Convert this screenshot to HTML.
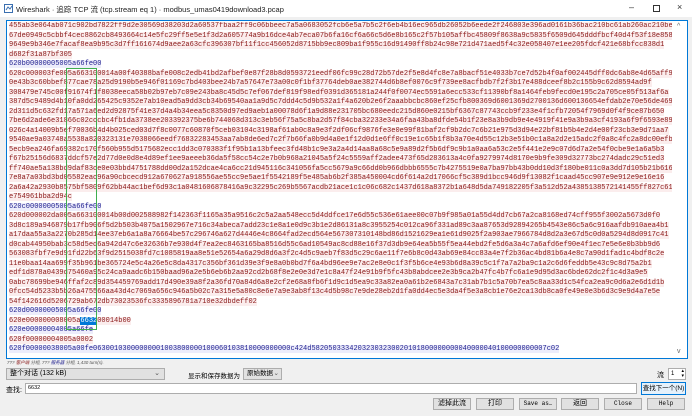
<!DOCTYPE html>
<html><head><meta charset="utf-8"><style>
*{margin:0;padding:0;box-sizing:border-box}
body{width:692px;height:416px;background:#f0f0f0;position:relative;overflow:hidden;font-family:"Liberation Sans","Noto Sans CJK SC",sans-serif;font-size:8px;color:#000}
.abs{position:absolute}
#title{left:0;top:0;width:692px;height:17px;background:#fff}
#ta{left:6px;top:20px;width:682px;height:339px;border:1px solid #0078d7;background:#fff;overflow:hidden}
#txt{position:absolute;left:2px;top:1px;width:663px;height:336px;overflow:hidden;font-family:"Liberation Mono",monospace;font-size:7px;line-height:9.5px;white-space:pre}
.c{color:#8a1818;background:#fbeded}
.s{color:#1e1e8e;background:#ededfb}
.hl{background:#0078d7;color:#fff}
.btn{position:absolute;top:398px;height:12px;width:38px;border:1px solid #adadad;background:#e1e1e1;font-size:7px;text-align:center;line-height:10px;font-family:"Liberation Mono","Noto Sans CJK SC",monospace}
.combo{position:absolute;border:1px solid #adadad;background:#e1e1e1;height:12px;font-size:7px;line-height:10px;padding-left:3px}
</style></head><body>
<div id="title" class="abs">
<svg class="abs" style="left:4px;top:4px" width="9" height="9"><rect x="0.5" y="0.5" width="8" height="8" fill="#fff" stroke="#3a6fb0"/><path d="M2 6 L4 3 L6 5 L8 2" stroke="#3a6fb0" fill="none"/></svg>
<div class="abs" style="left:16px;top:4px;font-size:7.5px;color:#222">Wireshark · 追踪 TCP 流 (tcp.stream eq 1) · modbus_umas0419download3.pcap</div>
<div class="abs" style="left:629px;top:2px;font-size:9px;color:#333">–</div>
<div class="abs" style="left:653px;top:5px;width:7px;height:7px;border:1px solid #333"></div>
<div class="abs" style="left:677px;top:2px;font-size:9px;color:#333">×</div>
</div>
<div id="ta" class="abs">
<div id="txt"><span class="c">455ab3e064ab071c902bd7822ff9d2e30569d38203d2a60537fbaa2ff9c06bbeec7a5a0683052fcb6e5a7b5c2f6eb4b16ec965db26052b6eede2f246803e396ad0161b36bac210bc61ab260ac210be</span>
<span class="c">67de0949c5cbbf4cec8862cb8493664c14e5fc29ff5e5e1f3d2a605774a9b16dce4ab7eca07b6fa16cf6a66c5d6e8b165c2f57b105affbc45809f8638a9c5835f6509d645dddfbcf40d4f53f18e8581f9e</span>
<span class="c">9649e9b346e7facaf8ea9b95c3d7ff161674d9aee2a63cfc396307bf11f1cc456052d8715bb9ec809ba1f955c16d91490ff8b24c98e721d471aed5f4c32e058407e1ee205fdcf421e68bfcc838d1</span>
<span class="c">d682f31a87bf305</span>
<span class="s">620b00000005005a66fe00</span>
<span class="c">620c000003fe005a663100014a00f40388bafe008c2edb41bd2afbef0e87f28b8d0593721eedf06fc99c28d72b57de2f5e8d4fc8e7a8bacf51e4033b7ce7d52b4f0af002445dff0dc6ab8e4d65aff9bef</span>
<span class="c">0e43b3c60bbef877cae78a25d9190b5e946f01169c7bd403bee24b7a57647e73a00c0f1bf37764deb0ae382744d6b8ef0076c9f739ee8acfbdb7f2f3b17e488dceef8b2c155b9c62d8594ad9f</span>
<span class="c">308479e745c00f91674f1f8038eeca58b02b97eb7c09e243ba8c45d5c7ef067def819f98edf0391d365181a244f0f0074ec5591a6ecc533cf11390bf8a1464feb9fecd0e195c2a705ce05f513af6a</span>
<span class="c">387d5c9489d4b10fa0dd265425c9352e7ab10ead5a9dd3cb34b69540aa1a9d5c7ddd4c5d9b532a1f4a620b2e6f2aaabbcbc860ef25cfb800369d6001369d2700136d600136654efdab2e70e56de469</span>
<span class="c">2d311d5c632fd17a571a6ed2d92875f41e37d4a4b34eea5c8350d97ed9aeb1a00078d6f1a9d88e231705bc680eedc215d860e0215bf6367c87743ccb9f233e4f1cfb72054f7969d0f4f9ce87b650</span>
<span class="c">7be6d2ade6e31866c02cccbc4fb1da3738ee203392375be6b744068d313c3eb56f75a5c8ba2d57f84cba32233e34a6faa43ba8dfde54b1f23e8a3b9db9e4e4919f41e9a3b9a3cf4193a6f9f6593e89</span>
<span class="c">026c4a14009b5ef70036b4d4b025ced03d7f8c0077c60870f5ceb03104c3198af61ab0c8a9e3f2df06cf9876fe3e0e99f81baf2cf9b2dc7c6b21e975d3d94e22bf81b5b4e2d4e00f23cb3e9d71aa7</span>
<span class="c">9540ae9a03748a5538a820323131e7038066eedf76832283453aa7ab8de6ed7c2f7b66fa0b9d4a0e1f12d0d1e6ff0c19e1c65b1f8b3a70e4d55c12b3e51b0c1a8a2d2e15adc2f0a8c4fc2a8dc00efb6</span>
<span class="c">5ecb9ea246fa69382c170f560b955d5175682ecc1dd3c070383f1f95b1a13bfeec3fd48b1c9e3a2a4d14aa8a68c5e9a89d2f5b6df9c9b1a0aa6a53c2e5f441e2e9c07d6d7a2e54f0cbe9e1a6a5b3</span>
<span class="c">f67b25156d6837ddcf57e2d77d0e0d8e4d89ef1ee9aeeeb36da5f58cc54c2e7b0b968a21045a5f24c5559aff2adee473f65d283613a4c0fa9279974d8170e9b9fe309d32773bc274dadc29c51ed3</span>
<span class="c">ff740ae5a138bd9daf83ce0e03bbd4751788dd00d2a152dcae4ca6cc21d945116c341056fa5cc5679a9c66dd0b966dbbb6555c7b4275519e0a7ba97bb43b0dd10d3f180be011c0a3dd7d105b21b616c</span>
<span class="c">7e8a7a03bd3bd05582eac96a90cbcecd912a670627a918556ae55cc9e5ae1f5542189f5e485ab6b2f385a450004cd6f614a2d17066cf5c389d1bcc946d9f13082f1caad45cc907e9e912e9e16e16</span>
<span class="c">2a6a42a2930b8575bf5809f62bb44ac1bef6d93c1a0481606878416a9c32295c269b5567acdb21ace1c1c06c682c1437d618a8372b1a648d5da749182205f3a512d52a4385138572141455ff827c61</span>
<span class="c">e754961bba2d94c</span>
<span class="s">620c00000005005a66fe00</span>
<span class="c">620d000002da005a663100014b00d002588982f142363f1165a35a9516c2c5a2aa548ecc5d4ddfce17e6d55c536e61aee00c07b9f985a01a55d4dd7cb67a2ca8168ed74cff955f3002a5673d0f0</span>
<span class="c">3d8c189a946879b17fb906f5d2b503b4075a1502967e716c34abeca7add23c1e8a1e0d9c3b1e2d86131a8c3955254c012ca96f331ad89c3aa87653d92894265b4543e86c5a6c916aafdb910aea4b1</span>
<span class="c">a17daa55a3a2270b285d14ee37eb6a1a8a76664be57c296746a627d4446e4c8664fad2ecd564e567307310148bd86d1521629ea1e61d9025f2a903ae7966784d8d2a3e67d5c0d0a5294d8d0917c41</span>
<span class="c">d0cab44950bab3c58d5ed6a942d47c6e32636b7e930d4f7ea2ec8463165ba8516d55c6ad10549ac8cd88e16f37d3db9e64ea5b55f5ea44ebd2fe5d6a3a4c7a6afd6ef90e4f1ec7e5e6e0b3bb9d6</span>
<span class="c">563083fbf7e9d91fd22b63f9d2515038fd7c1085819aa8e51e52654a6a29d8d6a3f2c4d5c9aeb7f83d5c29c6ae11f7e6b8c0d43ab69e84cc83a4e7f2b36ac4bd81b6a4e8c7a90d1fad1c4bdf8c2e</span>
<span class="c">11e0baa14aa699f35b961be365724e5c4a26e5c8da4317c356bf361d39e3f9e8a0b0bd7f6a4bd96ee9e7ac2e8e0c1f3f5b6ce4e93b6d8a39c5c1f7a7a2ba9c1a2c6d6feddb5e43c9c8d75a2b1</span>
<span class="c">edf1d878a0439d75460a95c24ca9aadc6b150baad96a2e5b6eb6b2aa92cd2b68f8e2e0e3d7e1c8a47f24e91b9f5fc43b8abdcee2e3b9ca2b47fc4b7fc6a1e9d95d3ac6bde62dc2f1c4d3a9e5</span>
<span class="c">0abc78699be946ffaf2c89d354459769add17d490e39a8f2a36fd70a84d6a8e2cf2e68a8fb6f1d9c1d5ea9c33a82ea0a61b2e6843a7c31ab7b1c5a70b7ea5c8aa33d1c54fca2ea9c0d6a2e6d1d1b</span>
<span class="c">0fcc54d5233b5b26a475566aa43d4c7069a656c946a5b02c7a315e5a80c8e6e7a9e3ab8f13c4d5b98c7e9de28eb2d1fa0dd4ec5e3da4f5e3a8cb1e76e2ca13db8ca0fe49e0e3b6d3c9e9d4a7e5e</span>
<span class="c">54f142616d5206729ab672db73023536fc3335896781a710e32dbdeff02</span>
<span class="s">620d00000005005a66fe00</span>
<span class="c">620e000000008005a<span class="hl">6632</span>00014b00</span>
<span class="s">620e00000004005a66fe</span>
<span class="c">620f00000004005a0002</span>
<span class="s">620f00000038005a00fe06300103000000001003800000100060103810000000000c424d58205033342032303230020101800000000040000040100000000007c02</span></div>
<div class="abs" style="left:59px;top:47px;width:31px;height:262px;border:1px solid #3fae4f"></div>
<div class="abs" style="left:670px;top:2px;font-size:7px;color:#666">^</div>
<div class="abs" style="left:670px;top:327px;font-size:7px;color:#666">v</div>
</div>
<div class="abs" style="left:7px;top:360px;font-size:4.5px;color:#555;font-style:italic">7?? <span style="color:#8a1818">客户端</span> 分组, 7?? <span style="color:#1e1e8e">服务器</span> 分组, 1,430 turn(s).</div>
<div class="combo" style="left:6px;top:368px;width:159px">整个对话 (132 kB)<span style="position:absolute;right:4px;color:#555">⌄</span></div>
<div class="abs" style="left:188px;top:370px;font-size:6.5px">显示和保存数据为</div>
<div class="combo" style="left:243px;top:368px;width:39px;font-size:6.5px">原始数据<span style="position:absolute;right:2px;color:#555">⌄</span></div>
<div class="abs" style="left:657px;top:370px;font-size:7px">流</div>
<div class="abs" style="left:668px;top:368px;width:18px;height:12px;background:#fff;border:1px solid #adadad;font-size:6px;padding-left:2px;line-height:10px">1<span style="position:absolute;right:1px;top:0;font-size:5px;line-height:5px">▴<br>▾</span></div>
<div class="abs" style="left:6px;top:385px;font-size:7px">查找:</div>
<div class="abs" style="left:25px;top:383px;width:612px;height:11px;background:#fff;border:1px solid #adadad;font-size:5.5px;line-height:9px;padding-left:2px">6632</div>
<div class="abs" style="left:641px;top:382px;width:45px;height:13px;border:1px solid #0078d7;background:#e5f1fb;font-size:6.5px;text-align:center;line-height:11px">查找下一个(N)</div>
<div class="btn" style="left:433px">滤掉此流</div>
<div class="btn" style="left:476px">打印</div>
<div class="btn" style="left:519px;font-size:6px">Save as…</div>
<div class="btn" style="left:561px">返回</div>
<div class="btn" style="left:604px;font-size:6px">Close</div>
<div class="btn" style="left:647px;font-size:6px">Help</div>
</body></html>
